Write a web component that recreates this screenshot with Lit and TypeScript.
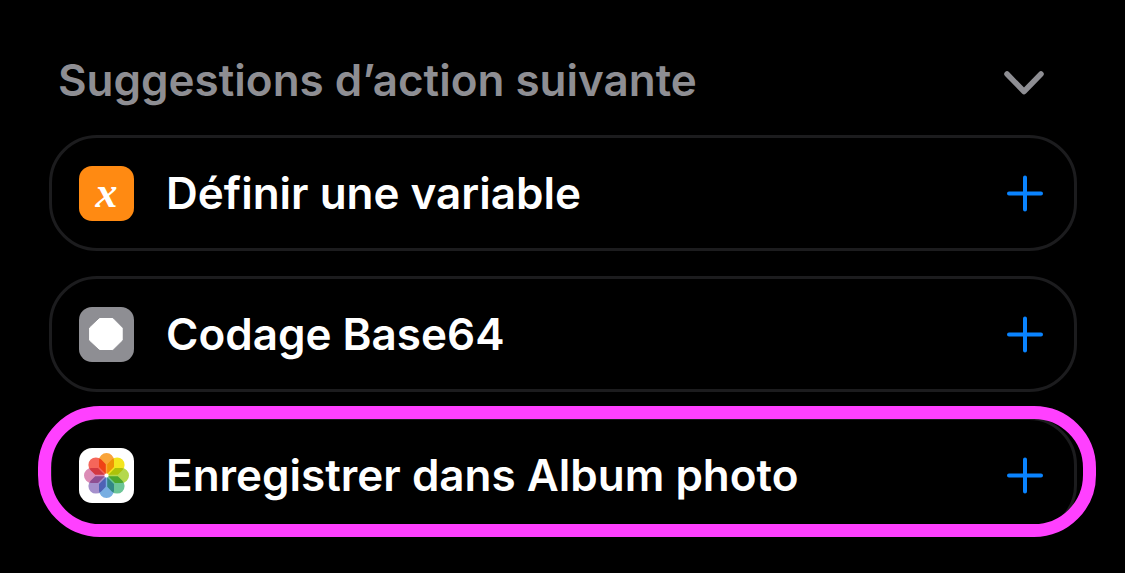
import { LitElement, html, svg, css } from "lit";
import { customElement, property, state } from "lit/decorators.js";

type IconName = "variable" | "base64" | "photos";

interface Suggestion {
  icon: IconName;
  label: string;
  highlighted?: boolean;
}

const SUGGESTIONS: Suggestion[] = [
  { icon: "variable", label: "Définir une variable" },
  { icon: "base64", label: "Codage Base64" },
  { icon: "photos", label: "Enregistrer dans Album photo", highlighted: true },
];

// Petal colours, clockwise from the top.
const PETALS = [
  "#f9a43a",
  "#f4e51e",
  "#b4d84c",
  "#6cc596",
  "#78aee2",
  "#a590cc",
  "#dc8cb6",
  "#f5665a",
];

@customElement("action-icon")
class ActionIcon extends LitElement {
  @property() name: IconName = "variable";

  static styles = css`
    :host {
      display: block;
      flex: none;
    }
    .tile {
      display: flex;
      align-items: center;
      justify-content: center;
      width: 55px;
      height: 55px;
      border-radius: 13px;
      overflow: hidden;
    }
    .variable {
      background: #ff8a12;
      color: #fff;
      font: italic bold 44px/40px "Liberation Serif", serif;
    }
    .base64 {
      background: #8e8e93;
    }
    .photos {
      background: #fff;
      isolation: isolate;
    }
    .petal {
      mix-blend-mode: multiply;
    }
    svg {
      display: block;
    }
  `;

  render() {
    if (this.name === "variable") {
      return html`<div class="tile variable" aria-hidden="true">x</div>`;
    }
    if (this.name === "base64") {
      return html`<div class="tile base64" aria-hidden="true">
        <svg width="55" height="55" viewBox="0 0 55 55">
          <path
            d="M20.6 11.5h13.2L43.2 21v12.2l-9.4 9.3H20.6L10.6 33.2V21z"
            fill="#fff"
            stroke="#fff"
            stroke-width="1"
            stroke-linejoin="round"
          />
        </svg>
      </div>`;
    }
    return html`<div class="tile photos" aria-hidden="true">
      <svg width="55" height="55" viewBox="0 0 55 55">
        ${PETALS.map(
          (color, i) => svg`<path class="petal" d="M20 12.5a7.5 7.5 0 0 1 15 0v6.5l-6.5 6.5h-2L20 19z"
            fill=${color} transform=${`rotate(${i * 45} 27.5 27.5)`} />`,
        )}
      </svg>
    </div>`;
  }
}

@customElement("app-root")
class AppRoot extends LitElement {
  @state() private open = true;

  static styles = css`
    :host {
      display: block;
      box-sizing: border-box;
      min-height: 100vh;
      padding: 48px 48px 36px 49px;
      background: #000;
      color: #fff;
      font-family: Inter, "Liberation Sans", sans-serif;
      font-size: 44px;
      line-height: 64px;
      font-weight: 600;
    }
    button {
      display: flex;
      align-items: center;
      justify-content: center;
      flex: none;
      margin: 0;
      padding: 0;
      border: 0;
      background: none;
      cursor: pointer;
    }
    .header {
      display: flex;
      align-items: center;
      justify-content: space-between;
      padding: 0 32px 0 9px;
      margin-bottom: 23px;
    }
    .title {
      margin: 0;
      font: inherit;
      color: #8e8e93;
    }
    .list {
      display: flex;
      flex-direction: column;
      gap: 25px;
      margin: 0;
      padding: 0;
      list-style: none;
    }
    .card {
      position: relative;
      display: flex;
      align-items: center;
      gap: 32px;
      padding: 23px 30px 23px 27px;
      border: 3px solid #1c1c1e;
      border-radius: 48px;
    }
    .label {
      flex: 1;
      min-width: 0;
    }
    .ring {
      position: absolute;
      inset: -14px -22px -7px -14px;
      border: 13px solid #ff40ff;
      border-radius: 62px;
      pointer-events: none;
    }
    svg {
      display: block;
    }
  `;

  render() {
    return html`
      <div class="header">
        <h2 class="title">Suggestions d’action suivante</h2>
        <button
          aria-label="Afficher ou masquer les suggestions"
          aria-expanded=${this.open}
          @click=${() => (this.open = !this.open)}
        >
          <svg width="42" height="42" viewBox="0 0 42 42">
            <path
              d="M4 15L21 32.5L38 15"
              fill="none"
              stroke="#8e8e93"
              stroke-width="5.5"
              stroke-linecap="round"
              stroke-linejoin="round"
            />
          </svg>
        </button>
      </div>
      ${this.open
        ? html`<ul class="list">
            ${SUGGESTIONS.map(
              (s) => html`<li class="card">
                <action-icon .name=${s.icon}></action-icon>
                <span class="label">${s.label}</span>
                <button aria-label=${`Ajouter ${s.label}`}>
                  <svg width="38" height="38" viewBox="0 0 38 38">
                    <path
                      d="M19 3.5v32M3 19.5h32"
                      fill="none"
                      stroke="#0a84ff"
                      stroke-width="4"
                      stroke-linecap="round"
                    />
                  </svg>
                </button>
                ${s.highlighted ? html`<span class="ring"></span>` : null}
              </li>`,
            )}
          </ul>`
        : null}
    `;
  }
}
